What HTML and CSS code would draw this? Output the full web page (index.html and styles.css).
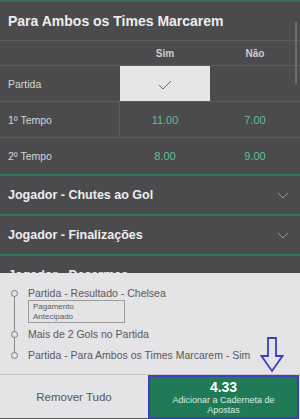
FILE: index.html
```html
<!DOCTYPE html>
<html>
<head>
<meta charset="utf-8">
<link rel="stylesheet" href="styles.css">
</head>
<body>
<div class="screen">
  <div class="topstrip"></div>
  <div class="market">
    <div class="market-title">Para Ambos os Times Marcarem</div>
    <div class="grid head">
      <div class="cell label"></div>
      <div class="cell colh">Sim</div>
      <div class="cell colh">Não</div>
    </div>
    <div class="grid row">
      <div class="cell label">Partida</div>
      <div class="cell odd selected">
        <svg width="14" height="10" viewBox="0 0 14 10"><path d="M1 5 L5 9 L13 1" fill="none" stroke="#6a6a6a" stroke-width="1"/></svg>
      </div>
      <div class="cell odd"></div>
    </div>
    <div class="grid row">
      <div class="cell label">1º Tempo</div>
      <div class="cell odd divider">11.00</div>
      <div class="cell odd">7.00</div>
    </div>
    <div class="grid row last">
      <div class="cell label">2º Tempo</div>
      <div class="cell odd">8.00</div>
      <div class="cell odd">9.00</div>
    </div>
  </div>
  <div class="section">
    <span>Jogador - Chutes ao Gol</span>
    <svg class="chev" width="12" height="7" viewBox="0 0 12 7"><path d="M1 1 L6 6 L11 1" fill="none" stroke="#9a9a9a" stroke-width="1"/></svg>
  </div>
  <div class="section">
    <span>Jogador - Finalizações</span>
    <svg class="chev" width="12" height="7" viewBox="0 0 12 7"><path d="M1 1 L6 6 L11 1" fill="none" stroke="#9a9a9a" stroke-width="1"/></svg>
  </div>
  <div class="section partial">
    <span>Jogador - Desarmes</span>
    <svg class="chev" width="12" height="7" viewBox="0 0 12 7"><path d="M1 1 L6 6 L11 1" fill="none" stroke="#9a9a9a" stroke-width="1"/></svg>
  </div>
  <div class="scrollbar"></div>

  <div class="slip">
    <div class="legs">
      <div class="leg first">
        <span class="dot"></span>
        <div class="leg-body">
          <div class="leg-text">Partida - Resultado - Chelsea</div>
          <div class="tag"><span>Pagamento</span><span>Antecipado</span></div>
        </div>
      </div>
      <div class="leg second">
        <span class="dot"></span>
        <div class="leg-body"><div class="leg-text">Mais de 2 Gols no Partida</div></div>
      </div>
      <div class="leg third">
        <span class="dot"></span>
        <div class="leg-body"><div class="leg-text">Partida - Para Ambos os Times Marcarem - Sim</div></div>
      </div>
      <div class="rail"></div>
    </div>
    <div class="actions">
      <div class="remove">Remover Tudo</div>
      <div class="add">
        <div class="price">4.33</div>
        <div class="add-text">Adicionar a Caderneta de<br>Apostas</div>
      </div>
    </div>
    <svg class="arrow" width="24" height="36" viewBox="0 0 24 36"><path d="M8 1 H16 V19 H22.5 L12 34 L1.5 19 H8 Z" fill="none" stroke="#3b3fbf" stroke-width="1.8" stroke-linejoin="miter"/></svg>
  </div>
</div>
</body>
</html>
```
FILE: styles.css
```css
html, body {
  margin: 0;
  padding: 0;
}
body {
  width: 300px;
  height: 419px;
  overflow: hidden;
  font-family: "Liberation Sans", Arial, sans-serif;
  background: #4b4a4c;
}
.screen {
  position: relative;
  width: 300px;
  height: 419px;
  overflow: hidden;
  display: flex;
  flex-direction: column;
}
.topstrip {
  height: 2px;
  background: #3e6a58;
  flex: none;
}
.market-title {
  height: 38px;
  line-height: 38px;
  padding-left: 8px;
  color: #ededed;
  font-weight: bold;
  font-size: 14px;
  border-bottom: 1px solid #5c5b5d;
}
.grid {
  display: grid;
  grid-template-columns: 120px 90px 90px;
}
.head {
  height: 24px;
  border-bottom: 1px solid #5c5b5d;
}
.cell {
  display: flex;
  align-items: center;
  justify-content: center;
}
.colh {
  color: #cfcfcf;
  font-weight: bold;
  font-size: 10px;
}
.row {
  height: 35px;
  border-bottom: 1px solid #5c5b5d;
}
.row.last {
  height: 36px;
  border-bottom: 2px solid #2f7a5c;
}
.label {
  justify-content: flex-start;
  padding-left: 8px;
  color: #d6d6d6;
  font-size: 10.5px;
}
.odd {
  color: #5fc094;
  font-size: 11px;
}
.selected {
  background: #e6e6e6;
}
.selected svg {
  margin-top: 2px;
}
.divider {
  border-left: 1px solid #5c5b5d;
  margin-left: -1px;
}
.section {
  height: 38px;
  flex: none;
  display: flex;
  align-items: center;
  justify-content: space-between;
  padding: 0 11px 0 8px;
  color: #eeeeee;
  font-weight: bold;
  font-size: 12.5px;
  border-bottom: 2px solid #2f7a5c;
}
.section.partial {
  border-bottom: none;
}
.scrollbar {
  position: absolute;
  left: 295px;
  top: 22px;
  width: 2px;
  height: 62px;
  border-radius: 1px;
  background: #6e6d70;
}
.slip {
  position: absolute;
  left: 0;
  top: 273px;
  width: 300px;
  height: 146px;
  background: #e4e4e6;
  display: flex;
  flex-direction: column;
}
.legs {
  position: relative;
  padding: 14px 0 0 11px;
  height: 101px;
  box-sizing: border-box;
  flex: none;
}
.leg {
  display: flex;
  align-items: flex-start;
}
.leg.second {
  margin-top: 5px;
}
.leg.third {
  margin-top: 8px;
}
.dot {
  width: 5px;
  height: 5px;
  border: 1px solid #7a7a7c;
  border-radius: 50%;
  background: #e4e4e6;
  margin-top: 3px;
  position: relative;
  z-index: 1;
  flex: none;
}
.leg-body {
  margin-left: 10px;
  display: flex;
  flex-direction: column;
  align-items: flex-start;
}
.leg-text {
  color: #58585a;
  font-size: 10.5px;
  line-height: 13px;
}
.tag {
  display: flex;
  flex-direction: column;
  height: 23px;
  box-sizing: border-box;
  border: 1px solid #9c9c9e;
  padding: 1px 50px 1px 4px;
  font-size: 8px;
  line-height: 10px;
  color: #5a5a5c;
}
.rail {
  position: absolute;
  left: 14px;
  top: 22px;
  width: 1px;
  height: 62px;
  background: #8a8a8c;
}
.actions {
  display: flex;
  flex: 1;
  border-top: 1px solid #c9c9cb;
}
.remove {
  width: 148px;
  display: flex;
  align-items: center;
  justify-content: center;
  color: #555557;
  font-size: 11.5px;
  border-bottom: 1px solid #555;
}
.add {
  flex: 1;
  margin-right: 1px;
  background: #1f7a55;
  border: 2px solid #3b3fbf;
  display: flex;
  flex-direction: column;
  align-items: center;
  justify-content: center;
  color: #ffffff;
}
.price {
  font-weight: bold;
  font-size: 14px;
  line-height: 15px;
}
.add-text {
  font-size: 9px;
  line-height: 10px;
  text-align: center;
  color: #d9efe4;
}
.arrow {
  position: absolute;
  left: 260px;
  top: 64px;
}
```
